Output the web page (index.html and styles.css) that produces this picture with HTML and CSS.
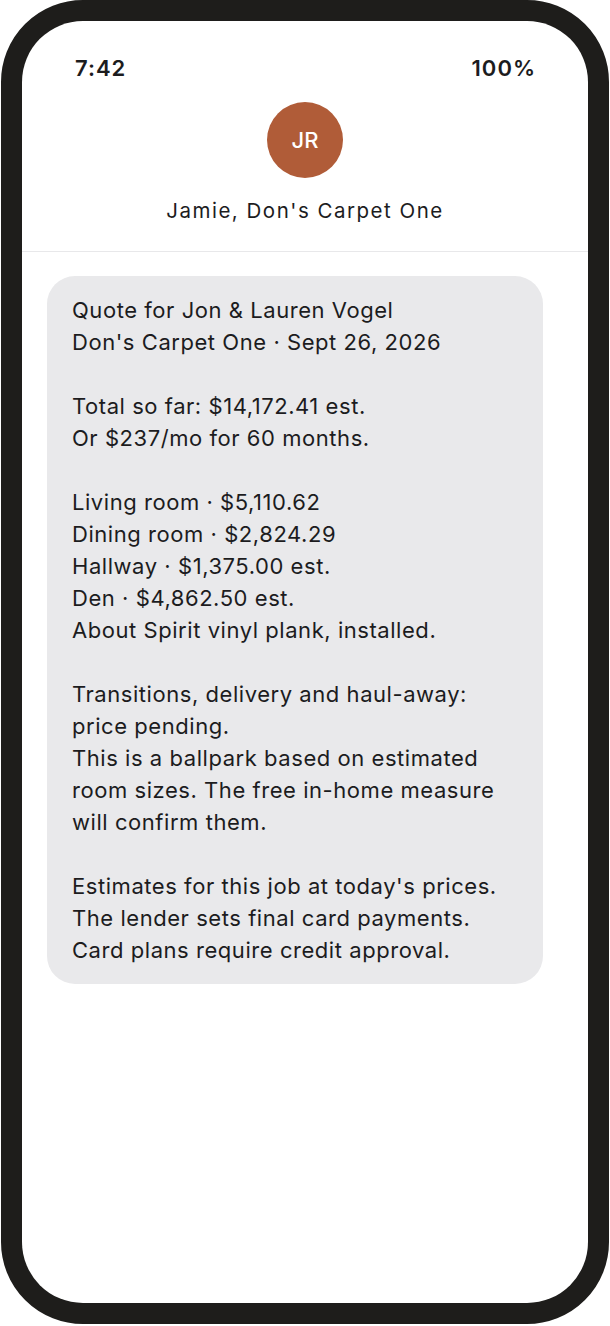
FILE: index.html
```html
<!DOCTYPE html>
<html lang="en">
<head>
    <meta charset="UTF-8">
    <meta name="viewport" content="width=device-width, initial-scale=1.0">
    <title>Quote message</title>
    <link rel="stylesheet" href="styles.css">
</head>
<body>
    <div class="phone">
        <div class="screen">
            <div class="status-bar">
                <span>7:42</span>
                <span>100%</span>
            </div>
            <div class="contact">
                <div class="avatar">JR</div>
                <div class="contact-name">Jamie, Don's Carpet One</div>
            </div>
            <div class="thread">
                <div class="bubble">
                    <p>Quote for Jon &amp; Lauren Vogel<br>Don's Carpet One · Sept 26, 2026</p>
                    <p>Total so far: $14,172.41 est.<br>Or $237/mo for 60 months.</p>
                    <p>Living room · $5,110.62<br>Dining room · $2,824.29<br>Hallway · $1,375.00 est.<br>Den · $4,862.50 est.<br>About Spirit vinyl plank, installed.</p>
                    <p>Transitions, delivery and haul-away:<br>price pending.<br>This is a ballpark based on estimated room sizes. The free in-home measure will confirm them.</p>
                    <p>Estimates for this job at today's prices.<br>The lender sets final card payments.<br>Card plans require credit approval.</p>
                </div>
            </div>
        </div>
    </div>
</body>
</html>
```

FILE: styles.css
```css
body {
    margin: 0;
    background-color: #fff;
    font-family: Inter, "Noto Sans", sans-serif;
    color: #1c1c1e;
}
.phone {
    box-sizing: border-box;
    width: 608px;
    height: 1324px;
    margin-left: 1px;
    border: 21px solid #1e1d1b;
    border-radius: 82px;
    background-color: #1e1d1b;
}
.screen {
    height: 100%;
    border-radius: 61px;
    background-color: #fff;
    overflow: hidden;
}
.status-bar {
    display: flex;
    justify-content: space-between;
    padding: 35px 52px 0 53px;
    font-size: 22px;
    font-weight: 600;
    line-height: 24px;
    letter-spacing: 1px;
}
.contact {
    display: flex;
    flex-direction: column;
    align-items: center;
    padding: 22px 0 27px;
    border-bottom: 1px solid #e8e8ea;
}
.avatar {
    width: 76px;
    height: 76px;
    border-radius: 50%;
    background-color: #b05c38;
    color: #fff;
    font-size: 22px;
    font-weight: 500;
    display: flex;
    align-items: center;
    justify-content: center;
}
.contact-name {
    margin-top: 20px;
    font-size: 20.5px;
    line-height: 26px;
    letter-spacing: 1.5px;
}
.thread {
    padding: 24px 45px 0 25px;
}
.bubble {
    background-color: #e9e9eb;
    border-radius: 28px;
    padding: 18px 20px 18px 25px;
    font-size: 22px;
    line-height: 32px;
    letter-spacing: 0.55px;
}
.bubble p {
    margin: 0 0 32px;
}
.bubble p:last-child {
    margin-bottom: 0;
}
```
